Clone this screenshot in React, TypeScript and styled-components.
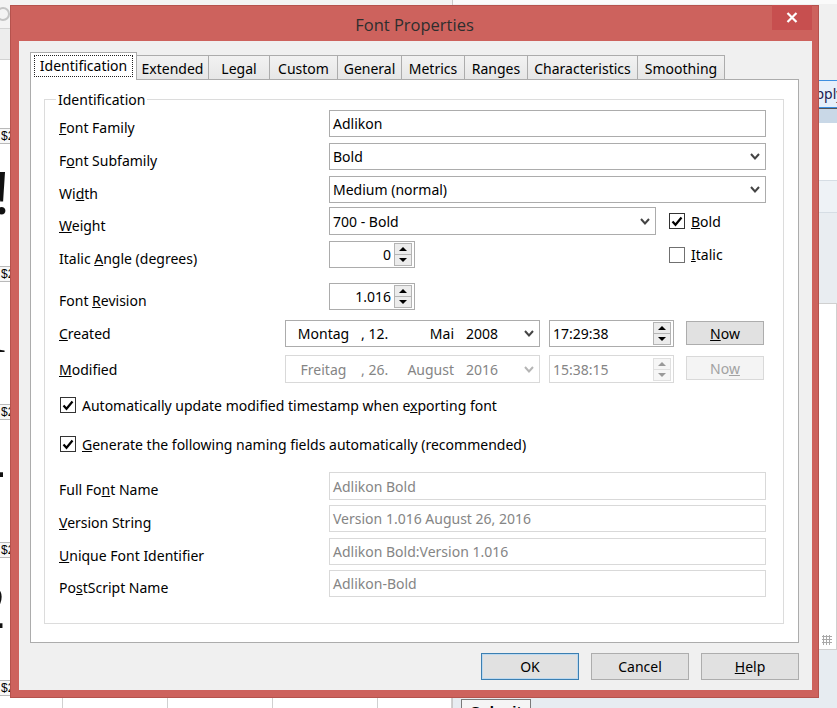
import React from 'react';
import styled, { createGlobalStyle } from 'styled-components';

const GlobalStyle = createGlobalStyle`
  html, body {
    margin: 0;
    padding: 0;
  }
  body {
    width: 837px;
    height: 708px;
    overflow: hidden;
    font-family: "Noto Sans", "Open Sans", sans-serif;
    font-size: 14px;
    color: #000;
  }
  * {
    box-sizing: border-box;
  }
`;

const Desktop = styled.div`
  position: relative;
  width: 837px;
  height: 708px;
  overflow: hidden;
  background: #fff;
`;

/* ---------- the application behind the dialog ---------- */

const BgApp = styled.div`
  display: flex;
  height: 100%;
  overflow: hidden;
`;

const BgSheet = styled.div`
  width: 453px;
  display: flex;
  flex-direction: column;
  background: #fff;
  border-right: 1px solid #c9c9c9;
  overflow: hidden;

  & > * {
    flex-shrink: 0;
  }
`;

const BgToolbar = styled.div`
  height: 29px;
  background: #f3f3f3;
  border-bottom: 1px solid #d4d4d4;
  display: flex;
  align-items: center;
`;

const BgRoundIcon = styled.div`
  width: 14px;
  height: 14px;
  margin-left: -4px;
  border-radius: 50%;
  border: 2px solid #c4c4c4;
`;

const BgBand = styled.div`
  height: 31px;
  background: #ededed;
  border-bottom: 1px solid #d2d2d2;
`;

const BgGrid = styled.div`
  display: grid;
  grid-template-columns: 63px 105px 105px 105px 1fr;
  grid-auto-rows: 138px;
  padding-top: 66px;
`;

const BgCell = styled.div`
  border-right: 1px solid #d0d0d0;
  overflow: hidden;
`;

const BgTag = styled.div`
  margin: 2px 0 0 -1px;
  width: 30px;
  height: 16px;
  border: 1px solid #b9b9b9;
  background: #f7f7f7;
  font-family: "Liberation Sans", sans-serif;
  font-size: 12px;
  line-height: 14px;
  padding-left: 1px;
`;

const BgGlyph = styled.div<{ $shift: number }>`
  margin-left: ${(p) => p.$shift}px;
  margin-top: 14px;
  font-family: "Liberation Serif", serif;
  font-size: 64px;
  line-height: 70px;
  color: #111;
`;

const BgSide = styled.div`
  flex: 1;
  display: flex;
  flex-direction: column;
  background: #e7ecf1;
  overflow: hidden;

  & > * {
    flex-shrink: 0;
  }
`;

const BgSideTop = styled.div`
  height: 80px;
  background: #f0f0f0;
  border-top: 4px solid #fafafa;
`;

const BgApplyRow = styled.div`
  height: 28px;
  display: flex;
  justify-content: flex-end;
  background: #f0f0f0;
`;

const BgApply = styled.div`
  width: 70px;
  margin-right: -23px;
  border: 1px solid #3c8fe0;
  background: #e6f0fa;
  font-size: 14px;
  line-height: 26px;
  text-align: center;
  color: #1a1a50;
`;

const BgTableHead = styled.div`
  height: 15px;
  border-top: 1px solid #555;
  background: #c9d8e7;
`;

const BgTableBody = styled.div`
  height: 57px;
  background: #fff;
`;

const BgStripe = styled.div<{ $h: number; $bg: string }>`
  height: ${(p) => p.$h}px;
  background: ${(p) => p.$bg};
  border-top: 1px solid #d6dde4;
`;

const BgPanel = styled.div`
  height: 347px;
  background: #fff;
  border: 1px solid #d0d0d0;
  display: flex;
  align-items: flex-end;
  justify-content: flex-end;
  padding: 4px;
`;

const BgGrip = styled.div`
  width: 10px;
  height: 10px;
  background-image: radial-gradient(#a9a9a9 1px, transparent 1.2px);
  background-size: 3px 3px;
`;

const BgSubmit = styled.div`
  margin: 49px 0 0 8px;
  width: 70px;
  height: 26px;
  border: 1px solid #7a7a7a;
  background: #f5f5f5;
  font-family: "Liberation Sans", sans-serif;
  font-weight: bold;
  font-size: 15px;
  line-height: 24px;
  text-align: center;
`;

/* ---------- dialog window ---------- */

const Window = styled.div`
  position: absolute;
  left: 10px;
  top: 5px;
  width: 809px;
  height: 693px;
  display: flex;
  flex-direction: column;
  background: #cd625d;
  border: 1px solid #b5524d;
`;

const TitleBar = styled.div`
  position: relative;
  height: 35px;
  display: flex;
  align-items: center;
  justify-content: center;
  font-family: "Open Sans", "Noto Sans", sans-serif;
  font-size: 16.5px;
  color: #2e2e2e;
  padding-top: 1px;
`;

const CloseButton = styled.div`
  position: absolute;
  top: -1px;
  right: 6px;
  width: 40px;
  height: 25px;
  background: #c74f4f;
  display: flex;
  align-items: center;
  justify-content: center;
`;

const Client = styled.div`
  flex: 1;
  margin: 0 6px 7px 8px;
  background: #f0f0f0;
  display: flex;
  flex-direction: column;
  padding: 11px 13px 10px 11px;
`;

const TabStrip = styled.div`
  height: 27px;
  display: flex;
  align-items: flex-end;
`;

const Tab = styled.div<{ $active?: boolean; $w: number }>`
  position: relative;
  width: ${(p) => p.$w}px;
  height: ${(p) => (p.$active ? 28 : 24)}px;
  margin-bottom: ${(p) => (p.$active ? -1 : 0)}px;
  margin-left: -1px;
  z-index: ${(p) => (p.$active ? 2 : 1)};
  background: ${(p) => (p.$active ? '#fff' : 'linear-gradient(#f2f2f2, #e6e6e6)')};
  border: 1px solid #acacac;
  border-bottom: none;
  display: flex;
  align-items: center;
  justify-content: center;
  padding-top: ${(p) => (p.$active ? 0 : 1)}px;
  white-space: nowrap;

  &:first-child {
    margin-left: 0;
  }
`;

const FocusText = styled.span`
  border: 1px dotted #222;
  padding: 0 5px;
  line-height: 20px;
  margin-top: -2px;
`;

const Panel = styled.div`
  height: 564px;
  background: #fff;
  border: 1px solid #acacac;
  padding: 10px 14px 18px 13px;
  display: flex;
  flex-direction: column;
`;

const GroupBox = styled.fieldset`
  flex: 1;
  margin: 0;
  min-width: 0;
  border: 1px solid #dcdcdc;
  padding: 0 17px 0 14px;
`;

const Legend = styled.legend`
  margin-left: -3px;
  padding: 0 2px;
  line-height: 19px;
`;

const Row = styled.div<{ $mt: number; $h?: number }>`
  display: flex;
  margin-top: ${(p) => p.$mt}px;
  height: ${(p) => p.$h ?? 27}px;
`;

const Label = styled.div<{ $w?: number; $drop?: number }>`
  width: ${(p) => p.$w ?? 270}px;
  flex-shrink: 0;
  line-height: 27px;
  padding-top: ${(p) => p.$drop ?? 4}px;
  white-space: nowrap;
`;

const Field = styled.div<{ $disabled?: boolean; $w?: number }>`
  flex: ${(p) => (p.$w ? 'none' : 1)};
  width: ${(p) => (p.$w ? `${p.$w}px` : 'auto')};
  height: 100%;
  border: 1px solid ${(p) => (p.$disabled ? '#d9d9d9' : '#acacac')};
  background: #fff;
  color: ${(p) => (p.$disabled ? '#858585' : '#000')};
  display: flex;
  align-items: center;
  padding-left: 3px;
  white-space: nowrap;
`;

const FieldText = styled.span`
  flex: 1;
`;

const Chevron = styled.svg<{ $disabled?: boolean }>`
  width: 10px;
  height: 7px;
  margin-right: 5px;
  color: ${(p) => (p.$disabled ? '#b5b5b5' : '#444')};
`;

const SpinValue = styled.span`
  flex: 1;
  text-align: right;
  padding-right: 3px;
`;

const SpinButtons = styled.div<{ $disabled?: boolean }>`
  width: 18px;
  height: 23px;
  margin-right: 2px;
  display: flex;
  flex-direction: column;
  border: 1px solid ${(p) => (p.$disabled ? '#e0e0e0' : '#b4b4b4')};
  background: ${(p) => (p.$disabled ? '#f6f6f6' : '#ececec')};
`;

const SpinHalf = styled.div<{ $down?: boolean; $disabled?: boolean }>`
  flex: 1;
  display: flex;
  align-items: center;
  justify-content: center;
  border-top: ${(p) => (p.$down ? `1px solid ${p.$disabled ? '#e0e0e0' : '#b4b4b4'}` : 'none')};

  &::before {
    content: '';
    border-left: 4px solid transparent;
    border-right: 4px solid transparent;
    ${(p) =>
      p.$down
        ? `border-top: 4px solid ${p.$disabled ? '#9a9a9a' : '#000'};`
        : `border-bottom: 4px solid ${p.$disabled ? '#9a9a9a' : '#000'};`}
  }
`;

const Side = styled.div`
  width: 97px;
  margin-left: 13px;
  display: flex;
  align-items: center;
`;

const Spacer = styled.div`
  flex: 1;
`;

const CheckItem = styled.div`
  display: flex;
  align-items: center;
  gap: 6px;
  white-space: nowrap;
`;

const Box = styled.div<{ $light?: boolean }>`
  width: 16px;
  height: 16px;
  border: 1px solid ${(p) => (p.$light ? '#707070' : '#333')};
  background: #fff;
  display: flex;
  align-items: center;
  justify-content: center;
  flex-shrink: 0;
`;

const CheckRow = styled.div<{ $mt: number }>`
  display: flex;
  align-items: center;
  height: 20px;
  margin-top: ${(p) => p.$mt}px;
  padding-left: 1px;
`;

const DateField = styled(Field)`
  width: 255px;
  flex: none;
  padding-left: 0;
`;

const DatePart = styled.span<{ $w: number; $align?: string }>`
  width: ${(p) => p.$w}px;
  text-align: ${(p) => p.$align ?? 'left'};
  flex-shrink: 0;
`;

const TimeField = styled(Field)`
  width: 125px;
  flex: none;
  margin-left: 9px;
`;

const SmallButton = styled.div<{ $disabled?: boolean }>`
  width: 78px;
  height: 24px;
  margin: 1px 0 0 12px;
  border: 1px solid ${(p) => (p.$disabled ? '#d9d9d9' : '#adadad')};
  background: ${(p) => (p.$disabled ? '#f4f4f4' : '#e1e1e1')};
  color: ${(p) => (p.$disabled ? '#a2a2a2' : '#000')};
  display: flex;
  align-items: center;
  justify-content: center;
`;

const ButtonRow = styled.div`
  margin-top: 10px;
  height: 27px;
  display: flex;
  justify-content: flex-end;
  gap: 12px;
`;

const DialogButton = styled.div<{ $default?: boolean }>`
  width: 98px;
  height: 27px;
  border: 1px solid ${(p) => (p.$default ? '#3c7fb1' : '#adadad')};
  box-shadow: ${(p) => (p.$default ? 'inset 0 0 0 1px #bcd9f0' : 'none')};
  background: #e1e1e1;
  display: flex;
  align-items: center;
  justify-content: center;
`;

const Check = () => (
  <svg width="12" height="11" viewBox="0 0 12 11">
    <path d="M1.5 5.5 L4.5 8.8 L10.5 1.5" fill="none" stroke="#000" strokeWidth="2.2" />
  </svg>
);

const Down = ({ disabled }: { disabled?: boolean }) => (
  <Chevron $disabled={disabled} viewBox="0 0 10 7">
    <polyline points="1,1 5,5.5 9,1" fill="none" stroke="currentColor" strokeWidth="2" />
  </Chevron>
);

const Spin = ({ disabled }: { disabled?: boolean }) => (
  <SpinButtons $disabled={disabled}>
    <SpinHalf $disabled={disabled} />
    <SpinHalf $down $disabled={disabled} />
  </SpinButtons>
);

const tabs = [
  { name: 'Identification', w: 107 },
  { name: 'Extended', w: 73 },
  { name: 'Legal', w: 62 },
  { name: 'Custom', w: 69 },
  { name: 'General', w: 65 },
  { name: 'Metrics', w: 64 },
  { name: 'Ranges', w: 64 },
  { name: 'Characteristics', w: 111 },
  { name: 'Smoothing', w: 88 },
];

const glyphs = [
  { ch: '!', shift: -9 },
  { ch: 'ı', shift: -12 },
  { ch: '-', shift: -16 },
  { ch: '2', shift: -26 },
  { ch: '', shift: 0 },
];

const App: React.FC = () => {
  return (
    <Desktop>
      <GlobalStyle />
      <BgApp>
        <BgSheet>
          <BgToolbar>
            <BgRoundIcon />
          </BgToolbar>
          <BgBand />
          <BgGrid>
            {glyphs.map((g, i) => (
              <React.Fragment key={i}>
                <BgCell>
                  <BgTag>$2</BgTag>
                  <BgGlyph $shift={g.shift}>{g.ch}</BgGlyph>
                </BgCell>
                <BgCell />
                <BgCell />
                <BgCell />
                <BgCell />
              </React.Fragment>
            ))}
          </BgGrid>
        </BgSheet>
        <BgSide>
          <BgSideTop />
          <BgApplyRow>
            <BgApply>Apply</BgApply>
          </BgApplyRow>
          <BgTableHead />
          <BgTableBody />
          <BgStripe $h={32} $bg="#eef2f6" />
          <BgStripe $h={91} $bg="#e9edf1" />
          <BgPanel>
            <BgGrip />
          </BgPanel>
          <BgSubmit>Submit</BgSubmit>
        </BgSide>
      </BgApp>

      <Window>
        <TitleBar>
          Font Properties
          <CloseButton>
            <svg width="12" height="11" viewBox="0 0 12 11">
              <path d="M1.5 1 L10.5 10 M10.5 1 L1.5 10" stroke="#fff" strokeWidth="2.2" />
            </svg>
          </CloseButton>
        </TitleBar>

        <Client>
          <TabStrip>
            {tabs.map((t, i) => (
              <Tab key={t.name} $w={t.w} $active={i === 0}>
                {i === 0 ? <FocusText>{t.name}</FocusText> : t.name}
              </Tab>
            ))}
          </TabStrip>

          <Panel>
            <GroupBox>
              <Legend>Identification</Legend>

              <Row $mt={1}>
                <Label>
                  <u>F</u>ont Family
                </Label>
                <Field>Adlikon</Field>
              </Row>

              <Row $mt={6}>
                <Label>
                  F<u>o</u>nt Subfamily
                </Label>
                <Field>
                  <FieldText>Bold</FieldText>
                  <Down />
                </Field>
              </Row>

              <Row $mt={6}>
                <Label>
                  Wi<u>d</u>th
                </Label>
                <Field>
                  <FieldText>Medium (normal)</FieldText>
                  <Down />
                </Field>
              </Row>

              <Row $mt={4} $h={28}>
                <Label $drop={5}>
                  <u>W</u>eight
                </Label>
                <Field>
                  <FieldText>700 - Bold</FieldText>
                  <Down />
                </Field>
                <Side>
                  <CheckItem>
                    <Box>
                      <Check />
                    </Box>
                    <span>
                      <u>B</u>old
                    </span>
                  </CheckItem>
                </Side>
              </Row>

              <Row $mt={6}>
                <Label>
                  Italic <u>A</u>ngle (degrees)
                </Label>
                <Field $w={86}>
                  <SpinValue>0</SpinValue>
                  <Spin />
                </Field>
                <Spacer />
                <Side>
                  <CheckItem>
                    <Box $light />
                    <span>
                      <u>I</u>talic
                    </span>
                  </CheckItem>
                </Side>
              </Row>

              <Row $mt={15}>
                <Label>
                  Font <u>R</u>evision
                </Label>
                <Field $w={86}>
                  <SpinValue>1.016</SpinValue>
                  <Spin />
                </Field>
              </Row>

              <Row $mt={10}>
                <Label $w={226} $drop={0}>
                  <u>C</u>reated
                </Label>
                <DateField>
                  <DatePart $w={75} $align="center">
                    Montag
                  </DatePart>
                  <DatePart $w={35}>, 12.</DatePart>
                  <DatePart $w={58} $align="right">
                    Mai
                  </DatePart>
                  <DatePart $w={44} $align="right">
                    2008
                  </DatePart>
                  <Spacer />
                  <Down />
                </DateField>
                <TimeField>
                  <FieldText>17:29:38</FieldText>
                  <Spin />
                </TimeField>
                <SmallButton>
                  <span>
                    <u>N</u>ow
                  </span>
                </SmallButton>
              </Row>

              <Row $mt={8} $h={28}>
                <Label $w={226} $drop={1}>
                  <u>M</u>odified
                </Label>
                <DateField $disabled>
                  <DatePart $w={75} $align="center">
                    Freitag
                  </DatePart>
                  <DatePart $w={35}>, 26.</DatePart>
                  <DatePart $w={58} $align="right">
                    August
                  </DatePart>
                  <DatePart $w={44} $align="right">
                    2016
                  </DatePart>
                  <Spacer />
                  <Down disabled />
                </DateField>
                <TimeField $disabled>
                  <FieldText>15:38:15</FieldText>
                  <Spin disabled />
                </TimeField>
                <SmallButton $disabled>
                  <span>
                    No<u>w</u>
                  </span>
                </SmallButton>
              </Row>

              <CheckRow $mt={12}>
                <CheckItem>
                  <Box>
                    <Check />
                  </Box>
                  <span>
                    Automatically update modified timestamp when e<u>x</u>porting font
                  </span>
                </CheckItem>
              </CheckRow>

              <CheckRow $mt={19}>
                <CheckItem>
                  <Box>
                    <Check />
                  </Box>
                  <span>
                    <u>G</u>enerate the following naming fields automatically (recommended)
                  </span>
                </CheckItem>
              </CheckRow>

              <Row $mt={18} $h={28}>
                <Label>
                  Full Fo<u>n</u>t Name
                </Label>
                <Field $disabled>Adlikon Bold</Field>
              </Row>

              <Row $mt={5}>
                <Label>
                  <u>V</u>ersion String
                </Label>
                <Field $disabled>Version 1.016 August 26, 2016</Field>
              </Row>

              <Row $mt={6}>
                <Label>
                  <u>U</u>nique Font Identifier
                </Label>
                <Field $disabled>Adlikon Bold:Version 1.016</Field>
              </Row>

              <Row $mt={5}>
                <Label>
                  Po<u>s</u>tScript Name
                </Label>
                <Field $disabled>Adlikon-Bold</Field>
              </Row>
            </GroupBox>
          </Panel>

          <ButtonRow>
            <DialogButton $default>OK</DialogButton>
            <DialogButton>Cancel</DialogButton>
            <DialogButton>
              <span>
                <u>H</u>elp
              </span>
            </DialogButton>
          </ButtonRow>
        </Client>
      </Window>
    </Desktop>
  );
};

export default App;
